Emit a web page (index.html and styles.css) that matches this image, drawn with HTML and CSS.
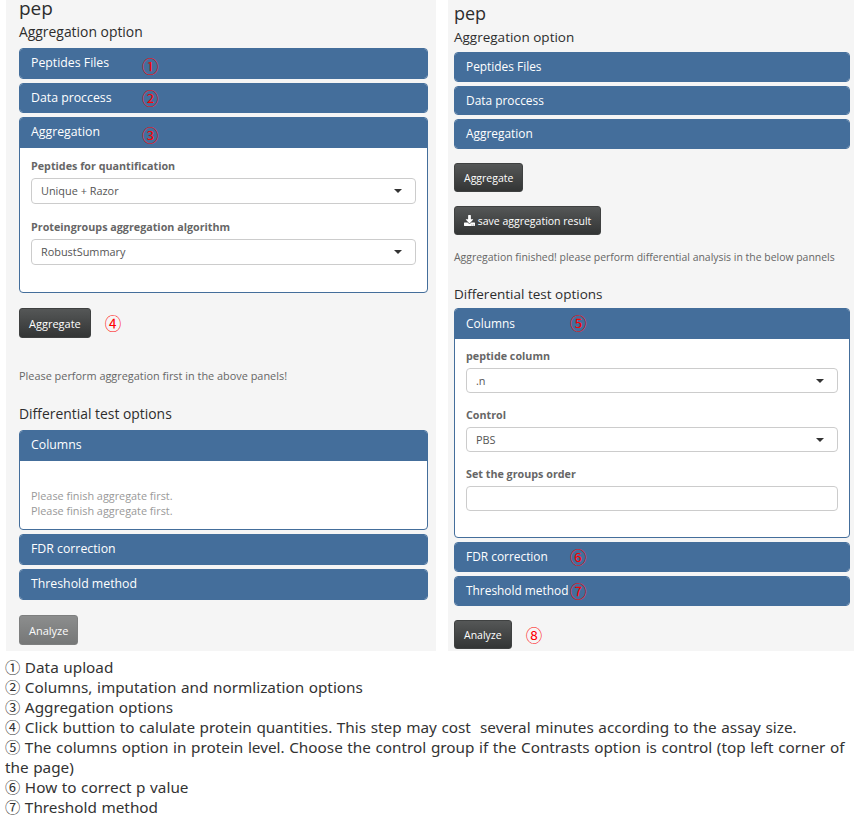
FILE: index.html
```html
<!DOCTYPE html>
<html lang="en">
<head>
    <meta charset="UTF-8">
    <meta name="viewport" content="width=device-width, initial-scale=1.0">
    <title>pep aggregation options</title>
    <link rel="stylesheet" href="styles.css">
</head>
<body>

    <div class="shots">
        <div class="well well-left">
            <h1>pep</h1>
            <h4 class="sub-option">Aggregation option</h4>
            <div class="panel-group">
                <div class="panel"><div class="panel-heading h-29">Peptides Files<span class="mark mark-low">①</span></div></div>
                <div class="panel"><div class="panel-heading h-28">Data proccess<span class="mark">②</span></div></div>
                <div class="panel">
                    <div class="panel-heading h-30">Aggregation<span class="mark mark-low">③</span></div>
                    <div class="panel-body body-agg">
                        <label>Peptides for quantification</label>
                        <div class="select select-tall">Unique + Razor</div>
                        <label>Proteingroups aggregation algorithm</label>
                        <div class="select select-tall">RobustSummary</div>
                    </div>
                </div>
            </div>
            <div class="btn-row agg-row">
                <button class="btn btn-tall">Aggregate</button>
                <span class="mark-inline">④</span>
            </div>
            <p class="help help-left">Please perform aggregation first in the above panels!</p>
            <h4 class="sub-diff">Differential test options</h4>
            <div class="panel-group">
                <div class="panel">
                    <div class="panel-heading h-30">Columns</div>
                    <div class="panel-body body-wait">Please finish aggregate first.<br>Please finish aggregate first.</div>
                </div>
                <div class="panel"><div class="panel-heading h-29">FDR correction</div></div>
                <div class="panel"><div class="panel-heading h-29">Threshold method</div></div>
            </div>
            <div class="btn-row analyze-row">
                <button class="btn btn-tall btn-disabled">Analyze</button>
            </div>
        </div>

        <div class="well well-right">
            <h1>pep</h1>
            <h4 class="sub-option">Aggregation option</h4>
            <div class="panel-group">
                <div class="panel"><div class="panel-heading h-28">Peptides Files</div></div>
                <div class="panel"><div class="panel-heading h-27">Data proccess</div></div>
                <div class="panel"><div class="panel-heading h-28">Aggregation</div></div>
            </div>
            <div class="btn-row agg-row-r">
                <button class="btn">Aggregate</button>
            </div>
            <div class="btn-row save-row">
                <button class="btn">
                    <svg class="icon" viewBox="0 0 512 512"><path fill="currentColor" d="M216 0h80c13.3 0 24 10.7 24 24v168h87.7c17.8 0 26.7 21.5 14.1 34.1L269.7 378.3c-7.5 7.5-19.8 7.5-27.3 0L90.1 226.1c-12.6-12.6-3.7-34.1 14.1-34.1H192V24c0-13.3 10.7-24 24-24zm296 376v112c0 13.3-10.7 24-24 24H24c-13.3 0-24-10.7-24-24V376c0-13.3 10.7-24 24-24h146.7l49 49c20.1 20.1 52.5 20.1 72.6 0l49-49H488c13.3 0 24 10.7 24 24zm-124 88c0-11-9-20-20-20s-20 9-20 20 9 20 20 20 20-9 20-20zm64 0c0-11-9-20-20-20s-20 9-20 20 9 20 20 20 20-9 20-20z"/></svg>
                    save aggregation result
                </button>
            </div>
            <p class="help help-right">Aggregation finished! please perform differential analysis in the below pannels</p>
            <h4 class="sub-diff-r">Differential test options</h4>
            <div class="panel-group">
                <div class="panel">
                    <div class="panel-heading h-30">Columns<span class="mark mark-r">⑤</span></div>
                    <div class="panel-body body-cols">
                        <label>peptide column</label>
                        <div class="select">.n</div>
                        <label>Control</label>
                        <div class="select">PBS</div>
                        <label>Set the groups order</label>
                        <div class="text-input"></div>
                    </div>
                </div>
                <div class="panel"><div class="panel-heading h-28">FDR correction<span class="mark mark-r">⑥</span></div></div>
                <div class="panel"><div class="panel-heading h-28">Threshold method<span class="mark mark-r">⑦</span></div></div>
            </div>
            <div class="btn-row analyze-row-r">
                <button class="btn">Analyze</button>
                <span class="mark-inline">⑧</span>
            </div>
        </div>
    </div>

    <div class="notes">
        <p>① Data upload</p>
        <p>② Columns, imputation and normlization options</p>
        <p>③ Aggregation options</p>
        <p>④ Click buttion to calulate protein quantities. This step may cost&nbsp; several minutes according to the assay size.</p>
        <p>⑤ The columns option in protein level. Choose the control group if the Contrasts option is control (top left corner of the page)</p>
        <p>⑥ How to correct p value</p>
        <p>⑦ Threshold method</p>
    </div>

</body>
</html>
```

FILE: styles.css
```css
body {
    font-family: "Open Sans", sans-serif;
    font-size: 12px;
    color: #666;
    margin: 0;
}
.shots {
    display: flex;
    gap: 12px;
    margin-left: 6px;
}
.well {
    background: #f5f5f5;
    height: 651px;
    overflow: hidden;
    box-sizing: border-box;
}
.well-left {
    width: 430px;
    padding: 0 8px 0 13px;
}
.well-right {
    width: 406px;
    padding: 0 4px 0 6px;
}
h1 {
    font-size: 19px;
    font-weight: 400;
    line-height: 16px;
    color: #2d2d2d;
    margin: 0;
}
.well-right h1 {
    font-size: 18px;
    margin-top: 5px;
}
h4 {
    font-size: 13.9px;
    font-weight: 400;
    line-height: 20px;
    color: #2d2d2d;
    margin: 0;
}
.well-right h4 {
    font-size: 13.5px;
}
.sub-option {
    margin: 6px 0 6px;
}
.well-right .sub-option {
    margin: 6px 0 5px;
}
.sub-diff {
    margin: 0 0 6px;
}
.sub-diff-r {
    margin: 0 0 4px;
}
.panel-group {
    display: flex;
    flex-direction: column;
    gap: 4px;
}
.panel {
    background: #fff;
    border: 1px solid #446e9b;
    border-radius: 4px;
    box-sizing: border-box;
    overflow: hidden;
}
.panel-heading {
    position: relative;
    display: flex;
    align-items: center;
    background: #446e9b;
    color: #fff;
    font-size: 12.3px;
    padding: 0 11px 2px;
    box-sizing: border-box;
}
.well-right .panel-heading {
    font-size: 11.9px;
}
.h-27 { height: 27px; }
.h-28 { height: 28px; }
.h-29 { height: 29px; }
.h-30 { height: 30px; padding-bottom: 3px; }
.panel-body {
    color: #666;
    box-sizing: border-box;
}
.body-agg {
    padding: 10px 11px 27px;
}
.body-cols {
    padding: 9px 11px 26px;
}
.body-wait {
    font-size: 10.85px;
    line-height: 15px;
    color: #999;
    padding: 27px 11px 11px;
}
label {
    display: block;
    font-size: 10.75px;
    font-weight: 700;
    line-height: 16px;
    color: #666;
    margin-bottom: 4px;
}
.select, .text-input {
    position: relative;
    height: 25px;
    line-height: 23px;
    border: 1px solid #ccc;
    border-radius: 4px;
    background: #fff;
    box-sizing: border-box;
    font-size: 10.9px;
    color: #555;
    padding-left: 9px;
    margin-bottom: 14px;
}
.select-tall {
    height: 26px;
    line-height: 24px;
    margin-bottom: 15px;
}
.body-cols .text-input,
.body-agg .select:last-child {
    margin-bottom: 0;
}
.select::after {
    content: "";
    position: absolute;
    right: 13px;
    top: 10px;
    border-top: 4px solid #333;
    border-left: 4px solid transparent;
    border-right: 4px solid transparent;
}
.btn-row {
    display: flex;
    align-items: center;
}
.btn {
    font-family: "Open Sans", sans-serif;
    font-size: 11px;
    color: #fff;
    height: 29px;
    padding: 0 9px;
    border: 1px solid #3f4141;
    border-radius: 3px;
    background: linear-gradient(#555757, #333535);
    white-space: nowrap;
}
.well-right .btn {
    font-size: 10.5px;
}
.btn-tall {
    height: 30px;
}
.btn-disabled {
    opacity: 0.65;
}
.icon {
    width: 11px;
    height: 11px;
    vertical-align: -1px;
}
.agg-row { margin-top: 15px; }
.agg-row-r { margin-top: 14px; }
.save-row { margin-top: 14px; }
.analyze-row { margin-top: 15px; }
.analyze-row-r { margin-top: 14px; }
.help {
    line-height: 16px;
    color: #666;
    margin: 0;
}
.help-left {
    font-size: 10.9px;
    margin: 30px 0 20px;
}
.help-right {
    font-size: 10.45px;
    margin: 14px 0 19px;
}
.mark, .mark-inline {
    font-family: "Noto Sans CJK SC", sans-serif;
    font-size: 16.5px;
    line-height: 16px;
    color: #f00;
}
.mark {
    position: absolute;
    left: 122px;
    top: 6px;
}
.mark-low {
    top: 9px;
}
.mark-r {
    left: 115px;
}
.mark-inline {
    margin-left: 14px;
}
.notes {
    font-family: "Noto Sans", "Noto Sans CJK SC", sans-serif;
    font-size: 15.3px;
    word-spacing: 0.6px;
    line-height: 20px;
    color: #333;
    padding: 6px 5px 0;
}
.notes p {
    margin: 0;
}
```
